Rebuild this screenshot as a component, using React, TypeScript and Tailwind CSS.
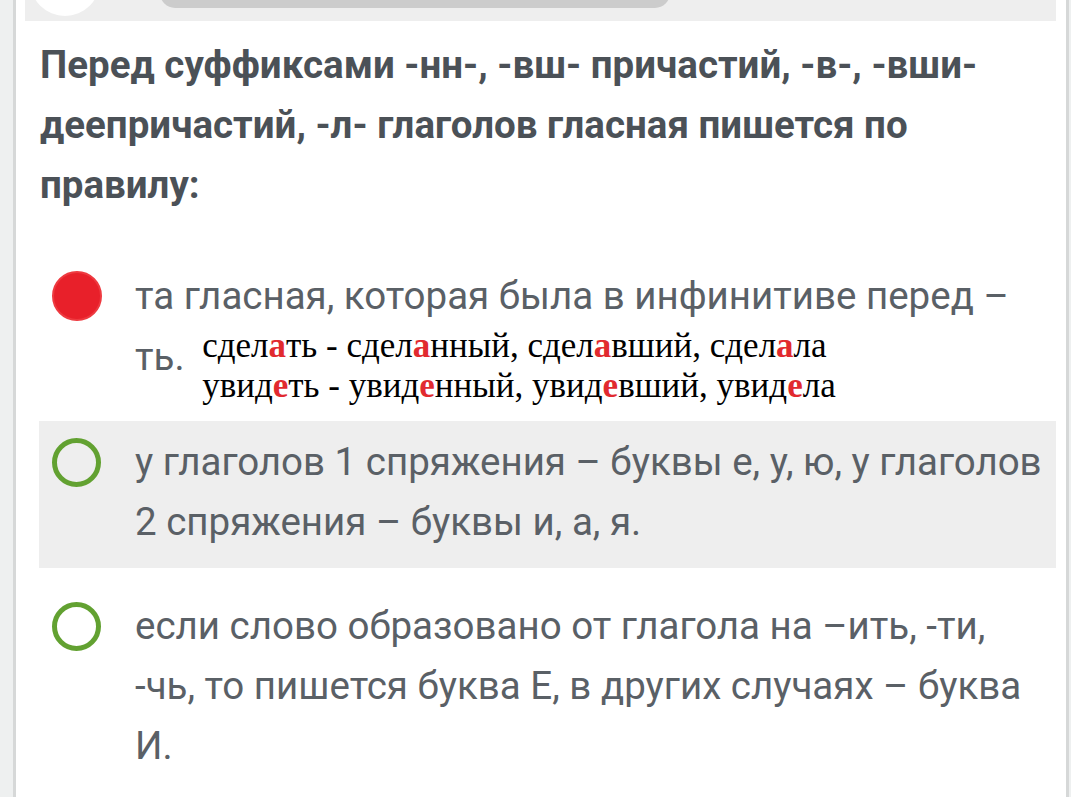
const roboto = { fontFamily: "Roboto, 'Noto Sans', sans-serif" };

const Radio = ({ checked }: { checked?: boolean }) =>
  checked ? (
    <span className="block h-[50px] w-[50px] rounded-full border-2 border-[#ee3a40] bg-[#e8202a]" />
  ) : (
    <span className="block h-[49px] w-[49px] rounded-full border-[5px] border-[#62a131] bg-transparent" />
  );

const Red = ({ children }: { children: string }) => (
  <b className="font-bold text-[#e12a2f]">{children}</b>
);

export default function App() {
  return (
    <div className="flex h-[797px] w-full overflow-hidden bg-[#eef0f0] pl-[13px] pr-[2px]">
      <div className="flex flex-1 flex-col border-x-[3px] border-[#d6d8d8] bg-white" style={roboto}>
        {/* top bar */}
        <div className="ml-[9px] mr-[10px] flex h-[21px] shrink-0 items-end overflow-hidden bg-[#eeeeee]">
          <div className="mb-[5px] ml-[5px] h-[70px] w-[70px] shrink-0 rounded-full bg-white" />
          <div className="mb-[13px] ml-[60px] h-[30px] w-[510px] rounded-full bg-[#cccccc]" />
        </div>

        <h2 className="ml-[24px] mt-[14px] whitespace-nowrap text-[38.5px] font-bold leading-[60px] text-[#4b5157]">
          Перед суффиксами -нн-, -вш- причастий, -в-, -вши-
          <br />
          деепричастий, -л- глаголов гласная пишется по
          <br />
          правилу:
        </h2>

        <div className="ml-[23px] mr-[10px] mt-[40px] flex flex-col whitespace-nowrap text-[38.5px] leading-[60px] text-[#5a6066]">
          <div className="flex pb-[15px] pl-[13px] pr-[10px] pt-[11px]">
            <div className="flex h-[60px] w-[83px] shrink-0 items-center">
              <Radio checked />
            </div>
            <p>
              та гласная, которая была в инфинитиве перед –
              <br />
              ть.{" "}
              <span
                className="ml-[8px] inline-block align-[-27px] text-[35px] leading-[40px] text-black"
                style={{ fontFamily: "'Liberation Serif', 'Times New Roman', serif" }}
              >
                сдел<Red>а</Red>ть - сдел<Red>а</Red>нный, сдел<Red>а</Red>вший, сдел<Red>а</Red>ла
                <br />
                увид<Red>е</Red>ть - увид<Red>е</Red>нный, увид<Red>е</Red>вший, увид<Red>е</Red>ла
              </span>
            </p>
          </div>

          <div className="flex bg-[#eeeeee] pb-[16px] pl-[13px] pr-[10px] pt-[11px]">
            <div className="flex h-[60px] w-[83px] shrink-0 items-center">
              <Radio />
            </div>
            <p>
              у глаголов 1 спряжения – буквы е, у, ю, у глаголов
              <br />2 спряжения – буквы и, а, я.
            </p>
          </div>

          <div className="mt-[17px] flex pl-[13px] pr-[10px] pt-[11px]">
            <div className="flex h-[60px] w-[83px] shrink-0 items-center">
              <Radio />
            </div>
            <p>
              если слово образовано от глагола на –ить, -ти,
              <br />
              -чь, то пишется буква Е, в других случаях – буква
              <br />
              И.
            </p>
          </div>
        </div>
      </div>
    </div>
  );
}
